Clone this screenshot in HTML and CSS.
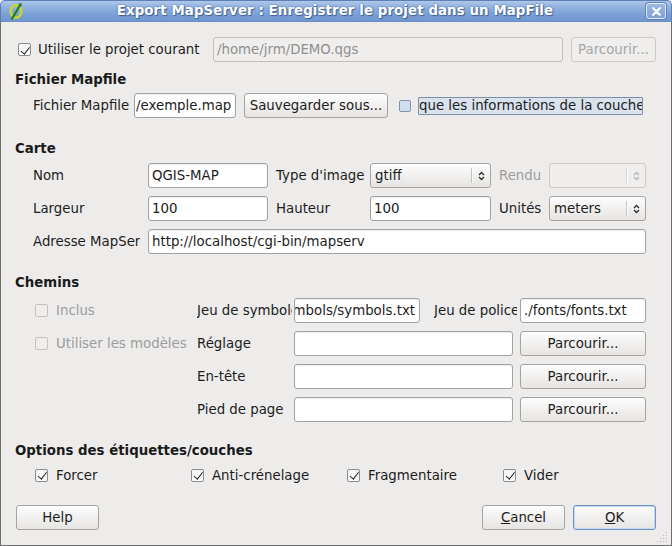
FILE: index.html
```html
<!DOCTYPE html>
<html lang="fr">
<head>
<meta charset="utf-8">
<title>Export MapServer</title>
<link rel="stylesheet" href="styles.css">
</head>
<body>
<div class="window">
  <div class="titlebar">
    <svg class="app-icon" width="16" height="19" viewBox="0 0 16 19">
      <ellipse cx="8" cy="9.5" rx="5.2" ry="6.3" fill="none" stroke="#c9d52b" stroke-width="2.6"/>
      <path d="M3.5 17.5 L12.5 2.5" stroke="#1f7d2a" stroke-width="2.2" fill="none"/>
      <path d="M10 2.2 L13.6 0.8 L13.4 4.8 Z" fill="#1f7d2a"/>
    </svg>
    <div class="title">Export MapServer : Enregistrer le projet dans un MapFile</div>
    <div class="close">
      <svg width="9" height="9" viewBox="0 0 9 9"><path d="M1.2 1.2 L7.8 7.8 M7.8 1.2 L1.2 7.8" stroke="#fff" stroke-width="2.2" stroke-linecap="round"/></svg>
    </div>
  </div>

  <div class="content">
    <div class="row-project">
      <label class="check project-check"><span class="box checked"></span><span>Utiliser le projet courant</span></label>
      <div class="field disabled project-field">/home/jrm/DEMO.qgs</div>
      <div class="btn disabled project-btn">Parcourir...</div>
    </div>

    <h2 class="heading h-mapfile">Fichier Mapfile</h2>
    <div class="row-mapfile">
      <span class="lbl mapfile-lbl">Fichier Mapfile</span>
      <div class="field mapfile-field">/exemple.map</div>
      <div class="btn save-btn">Sauvegarder sous...</div>
      <span class="box focus-box"></span>
      <span class="focus-label">que les informations de la couche</span>
    </div>

    <h2 class="heading h-section">Carte</h2>
    <div class="grid-carte">
      <span class="lbl">Nom</span>
      <div class="field">QGIS-MAP</div>
      <span class="lbl">Type d'image</span>
      <div class="combo"><span class="val">gtiff</span><span class="sep"></span><span class="arrows"><svg width="7" height="10" viewBox="0 0 7 10"><path d="M1 4 L3.5 1.5 L6 4 M1 6 L3.5 8.5 L6 6" fill="none" stroke="currentColor" stroke-width="1.3"/></svg></span></div>
      <span class="lbl dim">Rendu</span>
      <div class="combo disabled"><span class="val"></span><span class="sep"></span><span class="arrows"><svg width="7" height="10" viewBox="0 0 7 10"><path d="M1 4 L3.5 1.5 L6 4 M1 6 L3.5 8.5 L6 6" fill="none" stroke="currentColor" stroke-width="1.3"/></svg></span></div>

      <span class="lbl">Largeur</span>
      <div class="field">100</div>
      <span class="lbl">Hauteur</span>
      <div class="field">100</div>
      <span class="lbl">Unités</span>
      <div class="combo"><span class="val">meters</span><span class="sep"></span><span class="arrows"><svg width="7" height="10" viewBox="0 0 7 10"><path d="M1 4 L3.5 1.5 L6 4 M1 6 L3.5 8.5 L6 6" fill="none" stroke="currentColor" stroke-width="1.3"/></svg></span></div>

      <span class="lbl clip">Adresse MapServer</span>
      <div class="field span-url">http://localhost/cgi-bin/mapserv</div>
    </div>

    <h2 class="heading h-section h-chemins">Chemins</h2>
    <div class="grid-chemins">
      <label class="check dim c-first"><span class="box"></span><span>Inclus</span></label>
      <span class="lbl clip symb-lbl">Jeu de symboles</span>
      <div class="field end"><span>./symbols/symbols.txt</span></div>
      <span class="lbl clip police-lbl">Jeu de polices</span>
      <div class="field">./fonts/fonts.txt</div>

      <label class="check dim c-first"><span class="box"></span><span>Utiliser les modèles</span></label>
      <span class="lbl">Réglage</span>
      <div class="field wide"></div>
      <div class="btn c-last">Parcourir...</div>

      <span class="lbl c-label">En-tête</span>
      <div class="field wide"></div>
      <div class="btn c-last">Parcourir...</div>

      <span class="lbl c-label">Pied de page</span>
      <div class="field wide"></div>
      <div class="btn c-last">Parcourir...</div>
    </div>

    <h2 class="heading h-section h-options">Options des étiquettes/couches</h2>
    <div class="grid-options">
      <label class="check"><span class="box checked"></span><span>Forcer</span></label>
      <label class="check"><span class="box checked"></span><span>Anti-crénelage</span></label>
      <label class="check"><span class="box checked"></span><span>Fragmentaire</span></label>
      <label class="check"><span class="box checked"></span><span>Vider</span></label>
    </div>

    <div class="row-buttons">
      <div class="btn dlg-btn">Help</div>
      <div class="spacer"></div>
      <div class="btn dlg-btn"><span><u>C</u>ancel</span></div>
      <div class="btn dlg-btn default"><span><u>O</u>K</span></div>
    </div>

    <svg class="grip" width="12" height="12" viewBox="0 0 12 12">
      <g fill="#b9b8b6">
        <rect x="9" y="1" width="1" height="1"/>
        <rect x="6" y="4" width="1" height="1"/><rect x="9" y="4" width="1" height="1"/>
        <rect x="3" y="7" width="1" height="1"/><rect x="6" y="7" width="1" height="1"/><rect x="9" y="7" width="1" height="1"/>
        <rect x="0" y="10" width="1" height="1"/><rect x="3" y="10" width="1" height="1"/><rect x="6" y="10" width="1" height="1"/><rect x="9" y="10" width="1" height="1"/>
      </g>
    </svg>
  </div>
</div>
</body>
</html>
```

FILE: styles.css
```css
* { box-sizing: border-box; }

html, body {
  margin: 0;
  padding: 0;
}

body {
  width: 672px;
  height: 546px;
  background: #ffffff;
  font-family: "DejaVu Sans", "Liberation Sans", sans-serif;
  font-size: 13.33px;
  color: #1c1c1c;
  overflow: hidden;
}

.window {
  width: 672px;
  height: 546px;
  display: flex;
  flex-direction: column;
}

/* ---------- title bar ---------- */
.titlebar {
  height: 22px;
  flex: none;
  display: flex;
  align-items: center;
  padding: 0 5px 0 7px;
  background: linear-gradient(#aec7ea 0%, #8fb0df 35%, #7a9fd6 70%, #7197d0 100%);
  border: 1px solid #5d7fb3;
  border-bottom-color: #6b8ec4;
  border-radius: 5px 5px 0 0;
}

.app-icon {
  flex: none;
  display: block;
}

.title {
  flex: 1;
  text-align: center;
  color: #ffffff;
  font-weight: bold;
  font-size: 13.33px;
  line-height: 20px;
  letter-spacing: 0.1px;
  text-shadow: 0 0 2px #43679c, 1px 1px 1px #3f5f90;
  white-space: nowrap;
}

.close {
  flex: none;
  width: 20px;
  height: 16px;
  border: 1px solid #e3ecf8;
  border-radius: 3px;
  background: linear-gradient(#9bb8e2, #7ea2d6);
  box-shadow: 0 0 0 1px #5f80b2;
  display: flex;
  align-items: center;
  justify-content: center;
}

.close svg { display: block; }

/* ---------- dialog body ---------- */
.content {
  flex: 1;
  position: relative;
  display: flex;
  flex-direction: column;
  background: #edeceb;
  border: 1px solid #6d6d6d;
  border-top: none;
  padding: 15px 15px 0 15px;
}

.heading {
  margin: 0 0 0 -1px;
  font-size: 13.33px;
  font-weight: bold;
  line-height: 16px;
  color: #1a1a1a;
}

.h-mapfile { margin-top: 10px; }
.h-section { margin-top: 23px; }
.h-section.h-chemins { margin-top: 21px; }
.h-section.h-options { margin-top: 21px; }

.lbl {
  white-space: nowrap;
  line-height: 25px;
}

.lbl.clip { overflow: hidden; }
.dim { color: #9c9c9c; }

/* ---------- fields ---------- */
.field {
  height: 25px;
  border: 1px solid #a2a2a2;
  border-radius: 3px;
  background: #ffffff;
  box-shadow: inset 0 1px 1px rgba(0, 0, 0, 0.07);
  padding: 0 3px;
  line-height: 23px;
  white-space: nowrap;
  overflow: hidden;
  color: #1c1c1c;
}

.field.disabled {
  background: #efeeed;
  border-color: #c0bfbd;
  color: #8f8f8f;
  box-shadow: none;
}

.field.end {
  display: flex;
  justify-content: flex-end;
  padding-right: 4px;
}

.field.end span { flex: none; }

/* ---------- buttons ---------- */
.btn {
  height: 25px;
  border: 1px solid #a5a4a2;
  border-radius: 3px;
  background: linear-gradient(#fdfdfd, #f1f0ef 50%, #e6e5e3);
  display: flex;
  align-items: center;
  justify-content: center;
  white-space: nowrap;
  color: #1c1c1c;
}

.btn.disabled {
  background: #efeeed;
  border-color: #cbcac8;
  color: #a6a6a6;
}

.btn.default {
  border-color: #6f91c6;
  box-shadow: inset 0 0 0 1px #c7d7ee;
}

/* ---------- checkboxes ---------- */
.check {
  display: flex;
  align-items: center;
  gap: 8px;
  white-space: nowrap;
}

.box {
  flex: none;
  display: block;
  width: 13px;
  height: 13px;
  border: 1px solid #8d8d8d;
  border-radius: 2px;
  background: linear-gradient(#f4f4f4, #ffffff);
  position: relative;
}

.box.checked::after {
  content: "";
  position: absolute;
  left: 3.5px;
  top: 0.5px;
  width: 3.5px;
  height: 7.5px;
  border: solid #1e1e1e;
  border-width: 0 1.7px 1.7px 0;
  transform: rotate(38deg);
}

.check.dim .box {
  border-color: #c3c2c0;
  background: #efeeed;
}

/* ---------- row: project ---------- */
.row-project {
  display: flex;
  align-items: center;
  gap: 8px;
  padding-left: 2px;
}

.project-check { width: 187px; gap: 7px; }
.project-field { width: 350px; }
.project-btn { width: 85px; }

/* ---------- row: mapfile ---------- */
.row-mapfile {
  margin-top: 5px;
  display: flex;
  align-items: center;
  padding-left: 17px;
}

.mapfile-lbl { width: 101px; }
.mapfile-field { width: 102px; padding-left: 1px; }
.save-btn { width: 144px; margin-left: 8px; }

.focus-box {
  width: 12px;
  height: 12px;
  margin-left: 11px;
  border-color: #7d94b6;
  background: #d2deee;
}

.focus-label {
  margin-left: 7px;
  width: 225px;
  height: 18px;
  line-height: 16px;
  border: 1px solid #7b8eaa;
  border-radius: 1px;
  background: #d9e2ed;
  white-space: nowrap;
  overflow: hidden;
  padding-left: 0;
}

/* ---------- grid: carte ---------- */
.grid-carte {
  margin-top: 6px;
  padding-left: 17px;
  display: grid;
  grid-template-columns: 107px 120px 86px 121px 42px 97px;
  column-gap: 8px;
  row-gap: 8px;
  align-items: center;
}

.span-url { grid-column: 2 / 7; }

.combo {
  height: 25px;
  border: 1px solid #a5a4a2;
  border-radius: 3px;
  background: linear-gradient(#fdfdfd, #f1f0ef 50%, #e6e5e3);
  display: flex;
  align-items: center;
  color: #1c1c1c;
}

.combo .val {
  flex: 1;
  padding-left: 4px;
  white-space: nowrap;
  overflow: hidden;
}

.combo .sep {
  width: 1px;
  height: 15px;
  background: #c4c3c1;
  box-shadow: 1px 0 0 #ffffff;
}

.combo .arrows {
  width: 18px;
  display: flex;
  align-items: center;
  justify-content: center;
  color: #2a2a2a;
}

.combo .arrows svg { display: block; }

.combo.disabled {
  background: #efeeed;
  border-color: #cbcac8;
}

.combo.disabled .sep { background: #d6d5d3; }
.combo.disabled .arrows { color: #b3b3b3; }

/* ---------- grid: chemins ---------- */
.grid-chemins {
  margin-top: 7px;
  padding-left: 17px;
  display: grid;
  grid-template-columns: 164px 97px 126px 100px 126px;
  row-gap: 8px;
  align-items: center;
}

.c-first { grid-column: 1; padding-left: 2px; }
.c-label { grid-column: 2; }
.symb-lbl { margin-right: 2px; }
.police-lbl { margin-left: 14px; margin-right: 3px; }
.field.wide { grid-column: 3 / 5; margin-right: 7px; }
.c-last { grid-column: 5; }

/* ---------- options ---------- */
.grid-options {
  margin-top: 6px;
  padding-left: 19px;
  height: 20px;
  display: grid;
  grid-template-columns: repeat(4, 156px);
  align-items: center;
}

/* ---------- bottom buttons ---------- */
.row-buttons {
  margin-top: 20px;
  display: flex;
  align-items: center;
  gap: 8px;
}

.spacer { flex: 1; }
.dlg-btn { width: 83px; }

.grip {
  position: absolute;
  right: 2px;
  bottom: 2px;
  display: block;
}
```
